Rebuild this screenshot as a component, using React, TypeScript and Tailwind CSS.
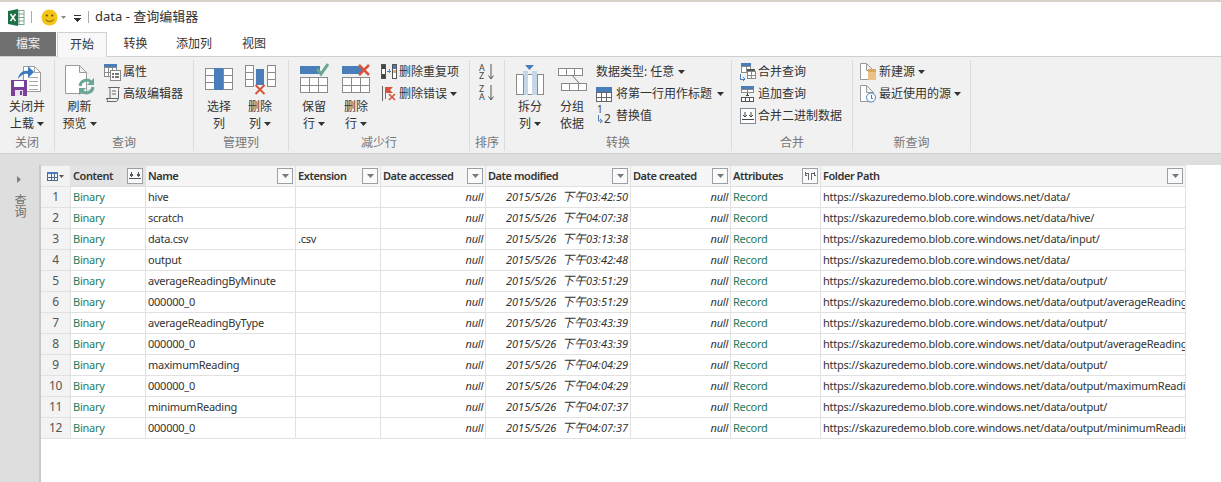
import React from "react";

const F = "[font-family:'Noto_Sans','Noto_Sans_CJK_SC',sans-serif]";

const Caret = ({ className = "" }: { className?: string }) => (
  <svg width="7" height="4" viewBox="0 0 7 4" className={`inline-block ${className}`}>
    <path d="M0 0h7L3.5 4z" fill="#333" />
  </svg>
);

const Ic = ({ w, h, children, className = "" }: { w: number; h: number; children: React.ReactNode; className?: string }) => (
  <svg width={w} height={h} viewBox={`0 0 ${w} ${h}`} className={`shrink-0 block ${className}`} shapeRendering="crispEdges">
    {children}
  </svg>
);

const G = "#8a8a8a";
const B = "#4a7ebb";

const Grid3 = ({ x, y, w, h, cols, rows, color = G }: { x: number; y: number; w: number; h: number; cols: number; rows: number; color?: string }) => (
  <g fill="none" stroke={color}>
    <rect x={x + 0.5} y={y + 0.5} width={w} height={h} fill="#fff" />
    {Array.from({ length: cols - 1 }, (_, i) => (
      <path key={"c" + i} d={`M${x + 0.5 + Math.round((w * (i + 1)) / cols)} ${y}v${h}`} />
    ))}
    {Array.from({ length: rows - 1 }, (_, i) => (
      <path key={"r" + i} d={`M${x} ${y + 0.5 + Math.round((h * (i + 1)) / rows)}h${w}`} />
    ))}
  </g>
);

const XMark = ({ x, y, s = 8, sw = 2 }: { x: number; y: number; s?: number; sw?: number }) => (
  <path d={`M${x} ${y}l${s} ${s}M${x + s} ${y}l${-s} ${s}`} stroke="#d4553c" strokeWidth={sw} fill="none" shapeRendering="auto" />
);

const Doc = ({ x = 0.5, y = 0.5, w = 20, h = 28 }: { x?: number; y?: number; w?: number; h?: number }) => (
  <path
    d={`M${x} ${y}h${w - 7}l7 7v${h - 7}h${-w}zM${x + w - 7} ${y}v7h7`}
    fill="#fff"
    stroke="#9a9a9a"
    shapeRendering="auto"
  />
);

const CloseIcon = () => (
  <Ic w={31} h={31}>
    <path d="M12.500 1.500h11l6 6v19h-17z" fill="#fff" stroke="#9a9a9a" shapeRendering="auto" />
    <path d="M23.500 1.500v6h6M18 12h9M18 16h9M18 20h9M18 24h9" stroke="#a8a8a8" fill="none" />
    <path d="M7 14c1-6 5-9 10-8V1l6 6-6 6V9c-4-1-7 1-10 5z" fill="#3c78c0" shapeRendering="auto" />
    <rect x="0" y="15" width="16" height="16" rx="1" fill="#7a3f98" />
    <rect x="3" y="16" width="10" height="6" fill="#fff" />
    <rect x="4" y="25" width="8" height="6" fill="#e8e0ee" />
    <rect x="9" y="26" width="2" height="4" fill="#7a3f98" />
  </Ic>
);

const RefreshIcon = () => (
  <Ic w={30} h={30}>
    <Doc x={0.5} y={0.5} w={21} h={28} />
    <g shapeRendering="auto" fill="none" stroke="#6aa596" strokeWidth="3">
      <path d="M15 21a6.500 6.500 0 0 1 11-4" />
      <path d="M28 22a6.500 6.500 0 0 1-11 4" />
    </g>
    <path d="M29 13v7h-7zM14 30v-7h7z" fill="#6aa596" shapeRendering="auto" />
  </Ic>
);

const PropIcon = () => (
  <Ic w={17} h={17}>
    <rect x="0" y="0" width="13" height="3" fill={B} />
    <Grid3 x={0} y={3} w={12} h={9} cols={3} rows={2} />
    <rect x="6.500" y="6.500" width="10" height="10" fill="#fff" stroke={G} />
    <path d="M8 9h2v2H8zM11 9h4v2h-4zM8 12h2v2H8zM11 12h4v2h-4z" fill="#777" />
  </Ic>
);

const ScrollIcon = () => (
  <Ic w={16} h={16}>
    <path d="M3.500 1.500h11c-1 0-1 2-1 3v8H1c2 1 2 2 1 3h9c1 0 2-1 2-3M3.500 1.500c1 0 1.500 1 1.500 2v9M7 5h4M7 8h4" fill="#f4f4f4" stroke="#666" shapeRendering="auto" />
  </Ic>
);

const SelectColIcon = () => (
  <Ic w={28} h={23}>
    <Grid3 x={0} y={0} w={27} h={21} cols={3} rows={3} />
    <rect x="9" y="0" width="9" height="22" fill={B} />
  </Ic>
);

const RemoveColIcon = () => (
  <Ic w={31} h={30}>
    <Grid3 x={0} y={0} w={8} h={21} cols={1} rows={3} />
    <Grid3 x={22} y={0} w={8} h={21} cols={1} rows={3} />
    <rect x="11" y="4" width="8" height="16" fill={B} />
    <XMark x={10.500} y={20} s={9} sw={2} />
  </Ic>
);

const KeepRowIcon = () => (
  <Ic w={29} h={30}>
    <rect x="0" y="3" width="20" height="8" fill={B} />
    <Grid3 x={0} y={14} w={27} h={15} cols={3} rows={2} />
    <path d="M17 6l4 5 7-10" stroke="#6aa596" strokeWidth="3" fill="none" shapeRendering="auto" />
  </Ic>
);

const RemoveRowIcon = () => (
  <Ic w={29} h={30}>
    <rect x="0" y="3" width="20" height="8" fill={B} />
    <Grid3 x={0} y={14} w={27} h={15} cols={3} rows={2} />
    <XMark x={17} y={2} s={10} sw={2.500} />
  </Ic>
);

const DupIcon = () => (
  <Ic w={16} h={16}>
    <rect x="0.500" y="0.500" width="4" height="14" fill="#fff" stroke="#555" />
    <rect x="1" y="1" width="3" height="4" fill="#444" />
    <rect x="1" y="10" width="3" height="4" fill="#444" />
    <rect x="11.500" y="0.500" width="4" height="14" fill="#fff" stroke="#555" />
    <rect x="12" y="1" width="3" height="4" fill="#4a7ebb" />
    <rect x="12" y="6" width="3" height="3" fill="#e0b060" />
    <path d="M6 7h4M8 5v4" stroke="#4a7ebb" />
  </Ic>
);

const ErrIcon = () => (
  <Ic w={15} h={16}>
    <path d="M0.500 0v15" stroke="#666" />
    <path d="M3 1h8l-3 3 3 3H3z" fill="#d4553c" shapeRendering="auto" />
    <XMark x={7} y={8} s={6} sw={1.600} />
    <path d="M3 1v12" stroke="#777" />
  </Ic>
);

const SortIcon = ({ top, bottom }: { top: string; bottom: string }) => (
  <div className="relative w-[16px] h-[16px]">
    <span className="absolute left-0 top-0 text-[9px] leading-[8px] text-[#444] whitespace-pre">{top + "\n" + bottom}</span>
    <svg width="6" height="16" viewBox="0 0 6 16" className="absolute left-[9px] top-0">
      <path d="M3 0v15M0.500 11.500L3 15l2.500-3.500" stroke="#555" fill="none" />
    </svg>
  </div>
);

const SplitIcon = () => (
  <Ic w={28} h={30}>
    <path d="M9 0h9l-4.500 5z" fill={B} shapeRendering="auto" />
    <rect x="0.500" y="9.500" width="27" height="20" fill="#fff" stroke={G} />
    <rect x="7" y="6" width="5" height="24" fill="#c5d6e8" />
    <rect x="16" y="6" width="5" height="24" fill="#c5d6e8" />
    <path d="M7 10v20M21 10v20" stroke={G} />
  </Ic>
);

const GroupByIcon = () => (
  <Ic w={29} h={23}>
    <Grid3 x={0} y={0} w={24} h={7} cols={3} rows={1} />
    <Grid3 x={3} y={15} w={25} h={7} cols={3} rows={1} />
    <path d="M14 7l7 8" stroke="#777" shapeRendering="auto" />
  </Ic>
);

const HeaderRowIcon = () => (
  <Ic w={16} h={15}>
    <rect x="0" y="0" width="16" height="5" fill={B} />
    <Grid3 x={0} y={5} w={15} h={9} cols={3} rows={2} color="#666" />
  </Ic>
);

const ReplaceIcon = () => (
  <div className="relative w-[16px] h-[18px]">
    <span className="absolute left-[1px] top-[-4px] text-[10px] leading-[12px] text-[#444]">1</span>
    <span className="absolute left-[8px] top-[5px] text-[12px] leading-[14px] text-[#444]">2</span>
    <svg width="8" height="10" viewBox="0 0 8 10" className="absolute left-0 top-[8px]">
      <path d="M2.500 0v6h3M4 4l2.500 2L4 8" stroke={B} fill="none" />
    </svg>
  </div>
);

const MergeIcon = () => (
  <Ic w={17} h={18}>
    <rect x="2" y="0" width="10" height="3" fill={B} />
    <Grid3 x={2} y={3} w={9} h={6} cols={2} rows={1} />
    <rect x="8" y="6" width="8" height="3" fill="#555" />
    <Grid3 x={8} y={8} w={8} h={7} cols={2} rows={2} />
    <path d="M1 11v5h5M4 14l2 2-2 2" stroke={B} fill="none" />
  </Ic>
);

const AppendIcon = () => (
  <Ic w={16} h={16}>
    <rect x="1" y="0" width="13" height="3" fill={B} />
    <Grid3 x={1} y={3} w={12} h={3} cols={2} rows={1} />
    <path d="M7.500 7v3M6 9h3" stroke="#444" />
    <Grid3 x={1} y={11} w={12} h={4} cols={3} rows={1} color="#555" />
  </Ic>
);

const BinaryIcon = ({ s = 16 }: { s?: number }) => (
  <Ic w={s} h={s}>
    <rect x="0.500" y="0.500" width={s - 1} height={s - 1} fill="#fff" stroke="#7f8a96" />
    <path d={`M2 ${s - 5}h${s - 4}`} stroke="#444" />
    <path d={`M5 4v5M3 7l2 2 2-2M${s - 5} 4v5M${s - 7} 7l2 2 2-2`} stroke="#444" fill="none" shapeRendering="auto" />
  </Ic>
);

const SourceIcon = () => (
  <Ic w={17} h={18}>
    <Doc x={0.500} y={0.500} w={13} h={16} />
    <rect x="8" y="7" width="8" height="10" rx="1.500" fill="#eac289" />
    <rect x="8" y="6" width="8" height="3" rx="1.500" fill="#d9a860" />
  </Ic>
);

const RecentIcon = () => (
  <Ic w={17} h={18}>
    <Doc x={0.500} y={0.500} w={13} h={16} />
    <circle cx="11" cy="12.500" r="4.500" fill="#fff" stroke="#4a7ebb" shapeRendering="auto" />
    <path d="M11 10v3h2" stroke="#4a7ebb" fill="none" />
  </Ic>
);

const Big = ({ icon, lines, caret, className = "", iconClass = "" }: { icon: React.ReactNode; lines: [string, string]; caret?: boolean; className?: string; iconClass?: string }) => (
  <div className={`flex flex-col items-center ${className}`}>
    <div className={`h-[36px] flex items-end justify-center ${iconClass}`}>{icon}</div>
    <div className="mt-[2px] text-[12px] leading-[17px] text-center text-[#333] whitespace-nowrap">
      <div>{lines[0]}</div>
      <div className="flex items-center justify-center gap-[3px]">
        {lines[1]}
        {caret && <Caret />}
      </div>
    </div>
  </div>
);

const Small = ({ icon, label, caret, iconW = 16, gap = 3 }: { icon?: React.ReactNode; label: string; caret?: boolean; iconW?: number; gap?: number }) => (
  <div className="flex items-center h-[22px] text-[12px] text-[#333] whitespace-nowrap" style={{ gap }}>
    {icon && <div className="flex justify-center" style={{ width: iconW }}>{icon}</div>}
    <span>{label}</span>
    {caret && <Caret className="ml-[1px]" />}
  </div>
);

const Group = ({ w, label, children, className = "" }: { w: number; label: string; children: React.ReactNode; className?: string }) => (
  <div className="flex flex-col shrink-0 border-r border-[#dcdcdc] h-[91px]" style={{ width: w }}>
    <div className={`flex-1 flex ${className}`}>{children}</div>
    <div className="h-[16px] text-center text-[12px] leading-[16px] text-[#777]">{label}</div>
  </div>
);

const HBtn = ({ kind = "filter" }: { kind?: "filter" | "expand" | "attr" }) => (
  <div className="w-[16px] h-[16px] shrink-0 border border-[#9aa0a6] bg-[#fafafa] flex items-center justify-center">
    {kind === "filter" && <svg width="7" height="4" viewBox="0 0 7 4"><path d="M0 0h7L3.500 4z" fill="#777" /></svg>}
    {kind === "expand" && (
      <svg width="14" height="12" viewBox="0 0 14 12" shapeRendering="crispEdges">
        <path d="M1 8.500h12" stroke="#555" />
        <path d="M3.500 2v4M2 4.500L3.500 6 5 4.500M10.500 2v4M9 4.500L10.500 6 12 4.500" stroke="#555" fill="none" />
      </svg>
    )}
    {kind === "attr" && (
      <svg width="14" height="10" viewBox="0 0 14 10" shapeRendering="crispEdges">
        <path d="M5.500 9V2.500H2.500M2.500 1v4M1.500 4h2M8.500 9V2.500h3M11.500 1v4M10.500 4h2" stroke="#666" fill="none" />
      </svg>
    )}
  </div>
);

const cols = "grid-cols-[30px_75px_150px_85px_105px_145px_100px_90px_365px]";

const heads: [string, "filter" | "expand" | "attr"][] = [
  ["Content", "expand"],
  ["Name", "filter"],
  ["Extension", "filter"],
  ["Date accessed", "filter"],
  ["Date modified", "filter"],
  ["Date created", "filter"],
  ["Attributes", "attr"],
  ["Folder Path", "filter"],
];

const base = "https://skazuredemo.blob.core.windows.net/data/";
const rows = [
  ["hive", "", "03:42:50", ""],
  ["scratch", "", "04:07:38", "hive/"],
  ["data.csv", ".csv", "03:13:38", "input/"],
  ["output", "", "03:42:48", ""],
  ["averageReadingByMinute", "", "03:51:29", "output/"],
  ["000000_0", "", "03:51:29", "output/averageReadingByMinute/"],
  ["averageReadingByType", "", "03:43:39", "output/"],
  ["000000_0", "", "03:43:39", "output/averageReadingByType/"],
  ["maximumReading", "", "04:04:29", "output/"],
  ["000000_0", "", "04:04:29", "output/maximumReading/"],
  ["minimumReading", "", "04:07:37", "output/"],
  ["000000_0", "", "04:07:37", "output/minimumReading/"],
];

const cell = "border-r border-b border-[#e1e1e1] pl-[2px] pr-[2px] overflow-hidden whitespace-nowrap flex items-center";
const nullCell = `${cell} justify-end italic pr-[1px]`;

export default function App() {
  return (
    <div className={`w-[1221px] h-[482px] overflow-hidden bg-white flex flex-col ${F}`}>
      {/* title bar */}
      <div className="h-[32px] shrink-0 border-t-2 border-[#d6d2c8] flex items-center pl-[8px] text-[13px] text-[#333]">
        <svg width="17" height="17" viewBox="0 0 17 17" className="shrink-0">
          <rect x="6" y="1.500" width="10" height="14" fill="#fff" stroke="#7aa68d" />
          <path d="M6 5h10M6 8.500h10M6 12h10M11 2v13" stroke="#7aa68d" />
          <path d="M0 2l10-2v17L0 15z" fill="#1d7044" />
          <path d="M2.500 5l5 7M7.500 5l-5 7" stroke="#fff" strokeWidth="1.500" />
        </svg>
        <div className="w-px h-[12px] bg-[#aaa] ml-[6px]" />
        <svg width="17" height="17" viewBox="0 0 17 17" className="ml-[9px] shrink-0">
          <circle cx="8.500" cy="8.500" r="8" fill="#f3c318" />
          <circle cx="5.800" cy="6.500" r="1.100" fill="#6b5200" />
          <circle cx="11.200" cy="6.500" r="1.100" fill="#6b5200" />
          <path d="M4.500 10.500c1.500 2.500 6.500 2.500 8 0" stroke="#6b5200" fill="none" />
        </svg>
        <svg width="5" height="3" viewBox="0 0 5 3" className="ml-[3px]"><path d="M0 0h5L2.500 3z" fill="#888" /></svg>
        <svg width="7" height="7" viewBox="0 0 7 7" className="ml-[8px] mt-[3px]" shapeRendering="crispEdges">
          <path d="M0 0h7v1H0zM0 3h7L3.500 7z" fill="#333" />
        </svg>
        <div className="w-px h-[12px] bg-[#aaa] ml-[7px]" />
        <span className="ml-[6px]">data - 查询编辑器</span>
      </div>
      {/* tabs */}
      <div className="h-[24px] shrink-0 flex text-[12px] text-[#333] relative z-10">
        <div className="w-[56px] bg-[#6f6f6f] text-[#f0f0f0] flex items-center justify-center">檔案</div>
        <div className="w-[50px] ml-[1px] border-x border-t border-[#d0d0d0] flex items-center justify-center -mb-px bg-[#f8f8f8]">开始</div>
        <div className="w-[55px] ml-[1px] flex items-center justify-center">转换</div>
        <div className="w-[62px] flex items-center justify-center">添加列</div>
        <div className="w-[58px] flex items-center justify-center">视图</div>
      </div>
      {/* ribbon */}
      <div className="h-[97px] shrink-0 bg-[#f1f1f1] border-t border-[#d0d0d0] flex pt-[3px]">
        <Group w={55} label="关闭" className="justify-center">
          <Big icon={<CloseIcon />} lines={["关闭并", "上载"]} caret />
        </Group>
        <Group w={139} label="查询" className="pl-[1px]">
          <Big className="w-[47px]" iconClass="pb-[1px]" icon={<RefreshIcon />} lines={["刷新", "预览"]} caret />
          <div className="pt-[1px]">
            <Small icon={<PropIcon />} label="属性" iconW={19} gap={1} />
            <Small icon={<ScrollIcon />} label="高级编辑器" iconW={19} gap={1} />
          </div>
        </Group>
        <Group w={95} label="管理列" className="pl-[8px] gap-[3px]">
          <Big className="w-[34px]" iconClass="pb-[5px]" icon={<SelectColIcon />} lines={["选择", "列"]} />
          <Big className="w-[42px]" iconClass="pb-[1px]" icon={<RemoveColIcon />} lines={["删除", "列"]} caret />
        </Group>
        <Group w={181} label="减少行" className="pl-[8px] gap-[8px]">
          <Big className="w-[34px]" iconClass="pb-[3px]" icon={<KeepRowIcon />} lines={["保留", "行"]} caret />
          <Big className="w-[34px]" iconClass="pb-[3px]" icon={<RemoveRowIcon />} lines={["删除", "行"]} caret />
          <div className="pt-[1px]">
            <Small icon={<DupIcon />} label="删除重复项" iconW={16} gap={2} />
            <Small icon={<ErrIcon />} label="删除错误" caret iconW={16} gap={2} />
          </div>
        </Group>
        <Group w={35} label="排序" className="flex-col items-center pt-[4px] gap-[5px]">
          <SortIcon top="A" bottom="Z" />
          <SortIcon top="Z" bottom="A" />
        </Group>
        <Group w={227} label="转换" className="pl-[7px]">
          <Big className="w-[36px]" iconClass="pb-[1px]" icon={<SplitIcon />} lines={["拆分", "列"]} caret />
          <Big className="w-[36px] ml-[6px]" iconClass="pb-[5px]" icon={<GroupByIcon />} lines={["分组", "依据"]} />
          <div className="ml-[6px] pt-[1px]">
            <Small label="数据类型: 任意" caret />
            <Small icon={<HeaderRowIcon />} label="将第一行用作标题" caret iconW={16} gap={4} />
            <Small icon={<ReplaceIcon />} label="替换值" iconW={16} gap={4} />
          </div>
        </Group>
        <Group w={121} label="合并" className="pl-[7px] pt-[1px]">
          <div>
            <Small icon={<MergeIcon />} label="合并查询" iconW={17} gap={2} />
            <Small icon={<AppendIcon />} label="追加查询" iconW={17} gap={2} />
            <Small icon={<BinaryIcon />} label="合并二进制数据" iconW={17} gap={2} />
          </div>
        </Group>
        <Group w={118} label="新查询" className="pl-[7px] pt-[1px]">
          <div>
            <Small icon={<SourceIcon />} label="新建源" caret iconW={17} gap={2} />
            <Small icon={<RecentIcon />} label="最近使用的源" caret iconW={17} gap={2} />
          </div>
        </Group>
      </div>
      {/* body */}
      <div className="flex-1 flex flex-col min-h-0">
        <div className="h-[12px] shrink-0 bg-[#dedede] border-t border-[#cfcfcf]" />
        <div className="flex-1 flex min-h-0">
          <div className="w-[41px] shrink-0 bg-[#dedede] border-r-2 border-[#c8c8c8] flex flex-col items-center pt-[11px] pr-[1px]">
            <svg width="4" height="7" viewBox="0 0 4 7"><path d="M0 0l4 3.500L0 7z" fill="#7f7f7f" /></svg>
            <div className="mt-[11px] [writing-mode:vertical-rl] text-[12px] leading-[14px] text-[#6f6f6f] whitespace-nowrap">查询</div>
          </div>
          <div className="flex-1 min-w-0 text-[11px] tracking-[-0.25px] text-[#333]">
            <div className={`grid ${cols} w-[1145px]`}>
              <div className="h-[22px] bg-[#f3f3f3] border-r border-t border-b border-[#e1e1e1] flex items-center justify-center gap-[1px]">
                <svg width="11" height="9" viewBox="0 0 11 9" shapeRendering="crispEdges">
                  <rect x="0" y="0" width="11" height="2" fill={B} />
                  <path d="M0.500 2v6.500h10V2M4 2v7M7 2v7M0 5.500h11" stroke="#4a6a8a" fill="none" />
                </svg>
                <svg width="5" height="3" viewBox="0 0 5 3"><path d="M0 0h5L2.500 3z" fill="#555" /></svg>
              </div>
              {heads.map(([h, k], i) => (
                <div
                  key={h}
                  className={`h-[22px] border-r border-t border-b border-[#e1e1e1] flex items-center justify-between pl-[2px] pr-[2px] font-semibold tracking-[-0.45px] ${i === 0 ? "bg-[#e3e3e3]" : "bg-[#f5f5f5]"}`}
                >
                  <span className="whitespace-nowrap">{h}</span>
                  <HBtn kind={k} />
                </div>
              ))}
              {rows.map((r, i) => (
                <React.Fragment key={i}>
                  <div className="h-[21px] bg-[#f3f3f3] border-r border-b border-[#e1e1e1] flex items-center justify-center text-[12px] text-[#555]">{i + 1}</div>
                  <div className={`${cell} text-[#1f7a5c]`}>Binary</div>
                  <div className={cell}>{r[0]}</div>
                  <div className={cell}>{r[1]}</div>
                  <div className={nullCell}>null</div>
                  <div className={`${cell} justify-end italic pr-[1px] tracking-normal`}>
                    2015/5/26&nbsp;&nbsp;<span className="text-[12px]">下午</span>{r[2]}
                  </div>
                  <div className={nullCell}>null</div>
                  <div className={`${cell} text-[#1f7a5c]`}>Record</div>
                  <div className={cell}>{base + r[3]}</div>
                </React.Fragment>
              ))}
            </div>
          </div>
        </div>
      </div>
    </div>
  );
}
